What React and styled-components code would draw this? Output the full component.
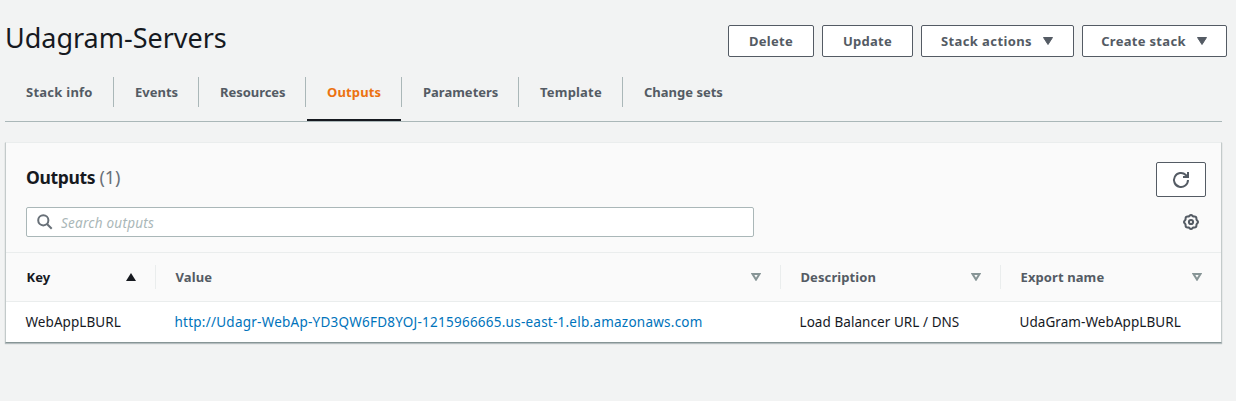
import React from 'react';
import styled, { createGlobalStyle } from 'styled-components';

const Global = createGlobalStyle`
  *, *::before { box-sizing: border-box; }
  body {
    margin: 0;
    background: #f2f3f3;
    color: #16191f;
    font: 13px/20px "Noto Sans", "Open Sans", sans-serif;
  }
`;

const Page = styled.main`
  width: 1236px;
  height: 401px;
  padding: 18px 9px 0 5px;
  overflow: hidden;
`;
const Header = styled.header`
  display: flex;
  justify-content: space-between;
  height: 59px;
`;
const Title = styled.h1`
  margin: 0;
  font-size: 27px;
  line-height: 40px;
  font-weight: 400;
  white-space: nowrap;
  letter-spacing: ${p => p.$spacing}px;
`;
const Actions = styled.div`
  display: flex;
  gap: 8px;
  padding-top: 7px;
`;
const Button = styled.button`
  display: flex;
  align-items: center;
  justify-content: center;
  gap: 10px;
  width: ${p => p.$width}px;
  height: ${p => p.$height || 32}px;
  padding: 0;
  border: 1px solid #545b64;
  border-radius: 2px;
  background: #fff;
  color: #545b64;
  font: 700 13px/20px "Noto Sans", sans-serif;
  letter-spacing: ${p => p.$spacing || 0.25}px;
  white-space: nowrap;
`;
const Tabs = styled.nav`
  display: flex;
  width: 1217px;
  height: 45px;
  border-bottom: 1px solid #aab7b8;
`;
const Tab = styled.div`
  position: relative;
  width: ${p => p.$width}px;
  height: 30px;
  padding-left: 21px;
  border-right: ${p => (p.$last ? 0 : 1)}px solid #aab7b8;
  color: ${p => (p.$active ? '#ec7211' : '#545b64')};
  font-weight: 700;
  line-height: 30px;
  white-space: nowrap;
  letter-spacing: ${p => p.$spacing || 0}px;
  &::after {
    content: '';
    display: ${p => (p.$active ? 'block' : 'none')};
    position: absolute;
    left: 1px;
    right: 0;
    top: 42px;
    height: 2px;
    background: #16191f;
  }
`;
const Card = styled.section`
  width: 1217px;
  height: 201px;
  margin-top: 20px;
  border: 1px solid #d5dbdb;
  border-top-color: #eaeded;
  border-left-color: #c3caca;
  border-right-color: #c3caca;
  border-bottom-color: #879596;
  background: #fff;
  box-shadow: 0 1px 1px rgba(0, 28, 36, 0.25);
`;
const CardHeader = styled.div`
  height: 110px;
  padding: 19px 15px 0 20px;
  background: #fafafa;
  border-bottom: 1px solid #eaeded;
`;
const HeaderRow = styled.div`
  display: flex;
  justify-content: space-between;
  height: ${p => p.$height}px;
`;
const Heading = styled.h2`
  margin: 2px 0 0;
  font-size: 17.5px;
  line-height: 26px;
  letter-spacing: -0.35px;
`;
const Count = styled.span`
  color: #687078;
  font-weight: 400;
  font-size: 18px;
  letter-spacing: 0;
`;
const Search = styled.label`
  display: flex;
  align-items: center;
  width: 728px;
  height: 30px;
  padding-left: 10px;
  gap: 8px;
  border: 1px solid #aab7b8;
  border-radius: 2px;
  background: #fff;
  color: #aab7b8;
  font-size: 13.5px;
  font-style: italic;
  white-space: nowrap;
  letter-spacing: 0.25px;
`;
const Placeholder = styled.span`
  padding-top: 2px;
`;
const Settings = styled.div`
  padding: 7px 7px 0 0;
  line-height: 0;
`;
const Row = styled.div`
  display: grid;
  grid-template-columns: 150px 625px 220px 220px;
  height: ${p => p.$height}px;
`;
const HeadRow = styled(Row)`
  align-items: center;
  background: #fafafa;
  border-bottom: 1px solid #eaeded;
`;
const HeadCell = styled.div`
  display: flex;
  align-items: center;
  justify-content: space-between;
  height: 24px;
  padding: 0 19px 0 ${p => (p.$first ? 20.5 : 19.5)}px;
  border-right: ${p => (p.$last ? 0 : 1)}px solid #eaeded;
  color: ${p => (p.$first ? '#16191f' : '#545b64')};
  font-weight: 700;
  letter-spacing: 0.1px;
`;
const Cell = styled.div`
  padding-left: ${p => (p.$first ? 19.5 : 18.5)}px;
  font-size: 13.5px;
  line-height: 40px;
  white-space: nowrap;
  letter-spacing: ${p => p.$spacing || 0}px;
`;
const Link = styled.a`
  color: #0073bb;
`;

const Caret = () => (
  <svg width="12" height="10" viewBox="0 0 12 10"><path d="M1.5 1.5h9L6 8.5z" fill="#545b64" stroke="#545b64" strokeLinejoin="round" /></svg>
);
const SortIcon = ({ up }) => (
  <svg width="10" height="8" viewBox="0 0 10 8">
    {up ? <path d="M5 0l5 8H0z" fill="#16191f" /> : <path d="M1.5 1h7L5 6.6z" fill="none" stroke="#879596" strokeWidth="2" />}
  </svg>
);
const SearchIcon = () => (
  <svg width="16" height="16" viewBox="0 0 16 16" fill="none" stroke="#687078" strokeWidth="2"><circle cx="6.3" cy="6.3" r="5.1" /><path d="M10 10l4.7 4.7" /></svg>
);
const RefreshIcon = () => (
  <svg width="18" height="18" viewBox="0 0 18 18" fill="none" stroke="#545b64" strokeWidth="2">
    <path d="M16 9a7 7 0 1 1-2.2-5.1L15.5 5.5M16 1v5h-5" />
  </svg>
);
const gearPath = Array.from({ length: 64 }, (_, i) => {
  const a = (i / 64) * Math.PI * 2;
  const r = 6.5 + 0.5 * Math.cos(8 * a);
  return `${i ? 'L' : 'M'}${(8 + r * Math.cos(a)).toFixed(2)} ${(8 + r * Math.sin(a)).toFixed(2)}`;
}).join('') + 'Z';
const GearIcon = () => (
  <svg width="16" height="16" viewBox="0 0 16 16" fill="none" stroke="#545b64" strokeWidth="2">
    <path d={gearPath} /><circle cx="8" cy="8" r="2.1" />
  </svg>
);

const tabs = [
  ['Stack info', 109, 0.25], ['Events', 85, 0], ['Resources', 107, -0.05], ['Outputs', 96, 0.15],
  ['Parameters', 117, 0], ['Template', 104, 0.2], ['Change sets', 110, 0],
];

export default function App() {
  return (
    <Page>
      <Global />
      <Header>
        <Title $spacing={-0.02}>Udagram-Servers</Title>
        <Actions>
          <Button $width={86}>Delete</Button>
          <Button $width={91}>Update</Button>
          <Button $width={153} $spacing={0.4}>Stack actions<Caret /></Button>
          <Button $width={145} $spacing={0.3}>Create stack<Caret /></Button>
        </Actions>
      </Header>
      <Tabs>
        {tabs.map(([name, width, spacing], i) => (
          <Tab key={name} $width={width} $spacing={spacing} $active={name === 'Outputs'} $last={i === tabs.length - 1}>{name}</Tab>
        ))}
      </Tabs>
      <Card>
        <CardHeader>
          <HeaderRow $height={45}>
            <Heading>Outputs <Count>(1)</Count></Heading>
            <Button $width={50} $height={35} aria-label="Refresh"><RefreshIcon /></Button>
          </HeaderRow>
          <HeaderRow $height={30}>
            <Search><SearchIcon /><Placeholder>Search outputs</Placeholder></Search>
            <Settings><GearIcon /></Settings>
          </HeaderRow>
        </CardHeader>
        <HeadRow $height={49}>
          <HeadCell $first>Key<SortIcon up /></HeadCell>
          <HeadCell>Value<SortIcon /></HeadCell>
          <HeadCell>Description<SortIcon /></HeadCell>
          <HeadCell $last>Export name<SortIcon /></HeadCell>
        </HeadRow>
        <Row $height={40}>
          <Cell $first $spacing={0.07}>WebAppLBURL</Cell>
          <Cell $spacing={0.24}><Link>http://Udagr-WebAp-YD3QW6FD8YOJ-1215966665.us-east-1.elb.amazonaws.com</Link></Cell>
          <Cell $spacing={0.06}>Load Balancer URL / DNS</Cell>
          <Cell $spacing={0.07}>UdaGram-WebAppLBURL</Cell>
        </Row>
      </Card>
    </Page>
  );
}
